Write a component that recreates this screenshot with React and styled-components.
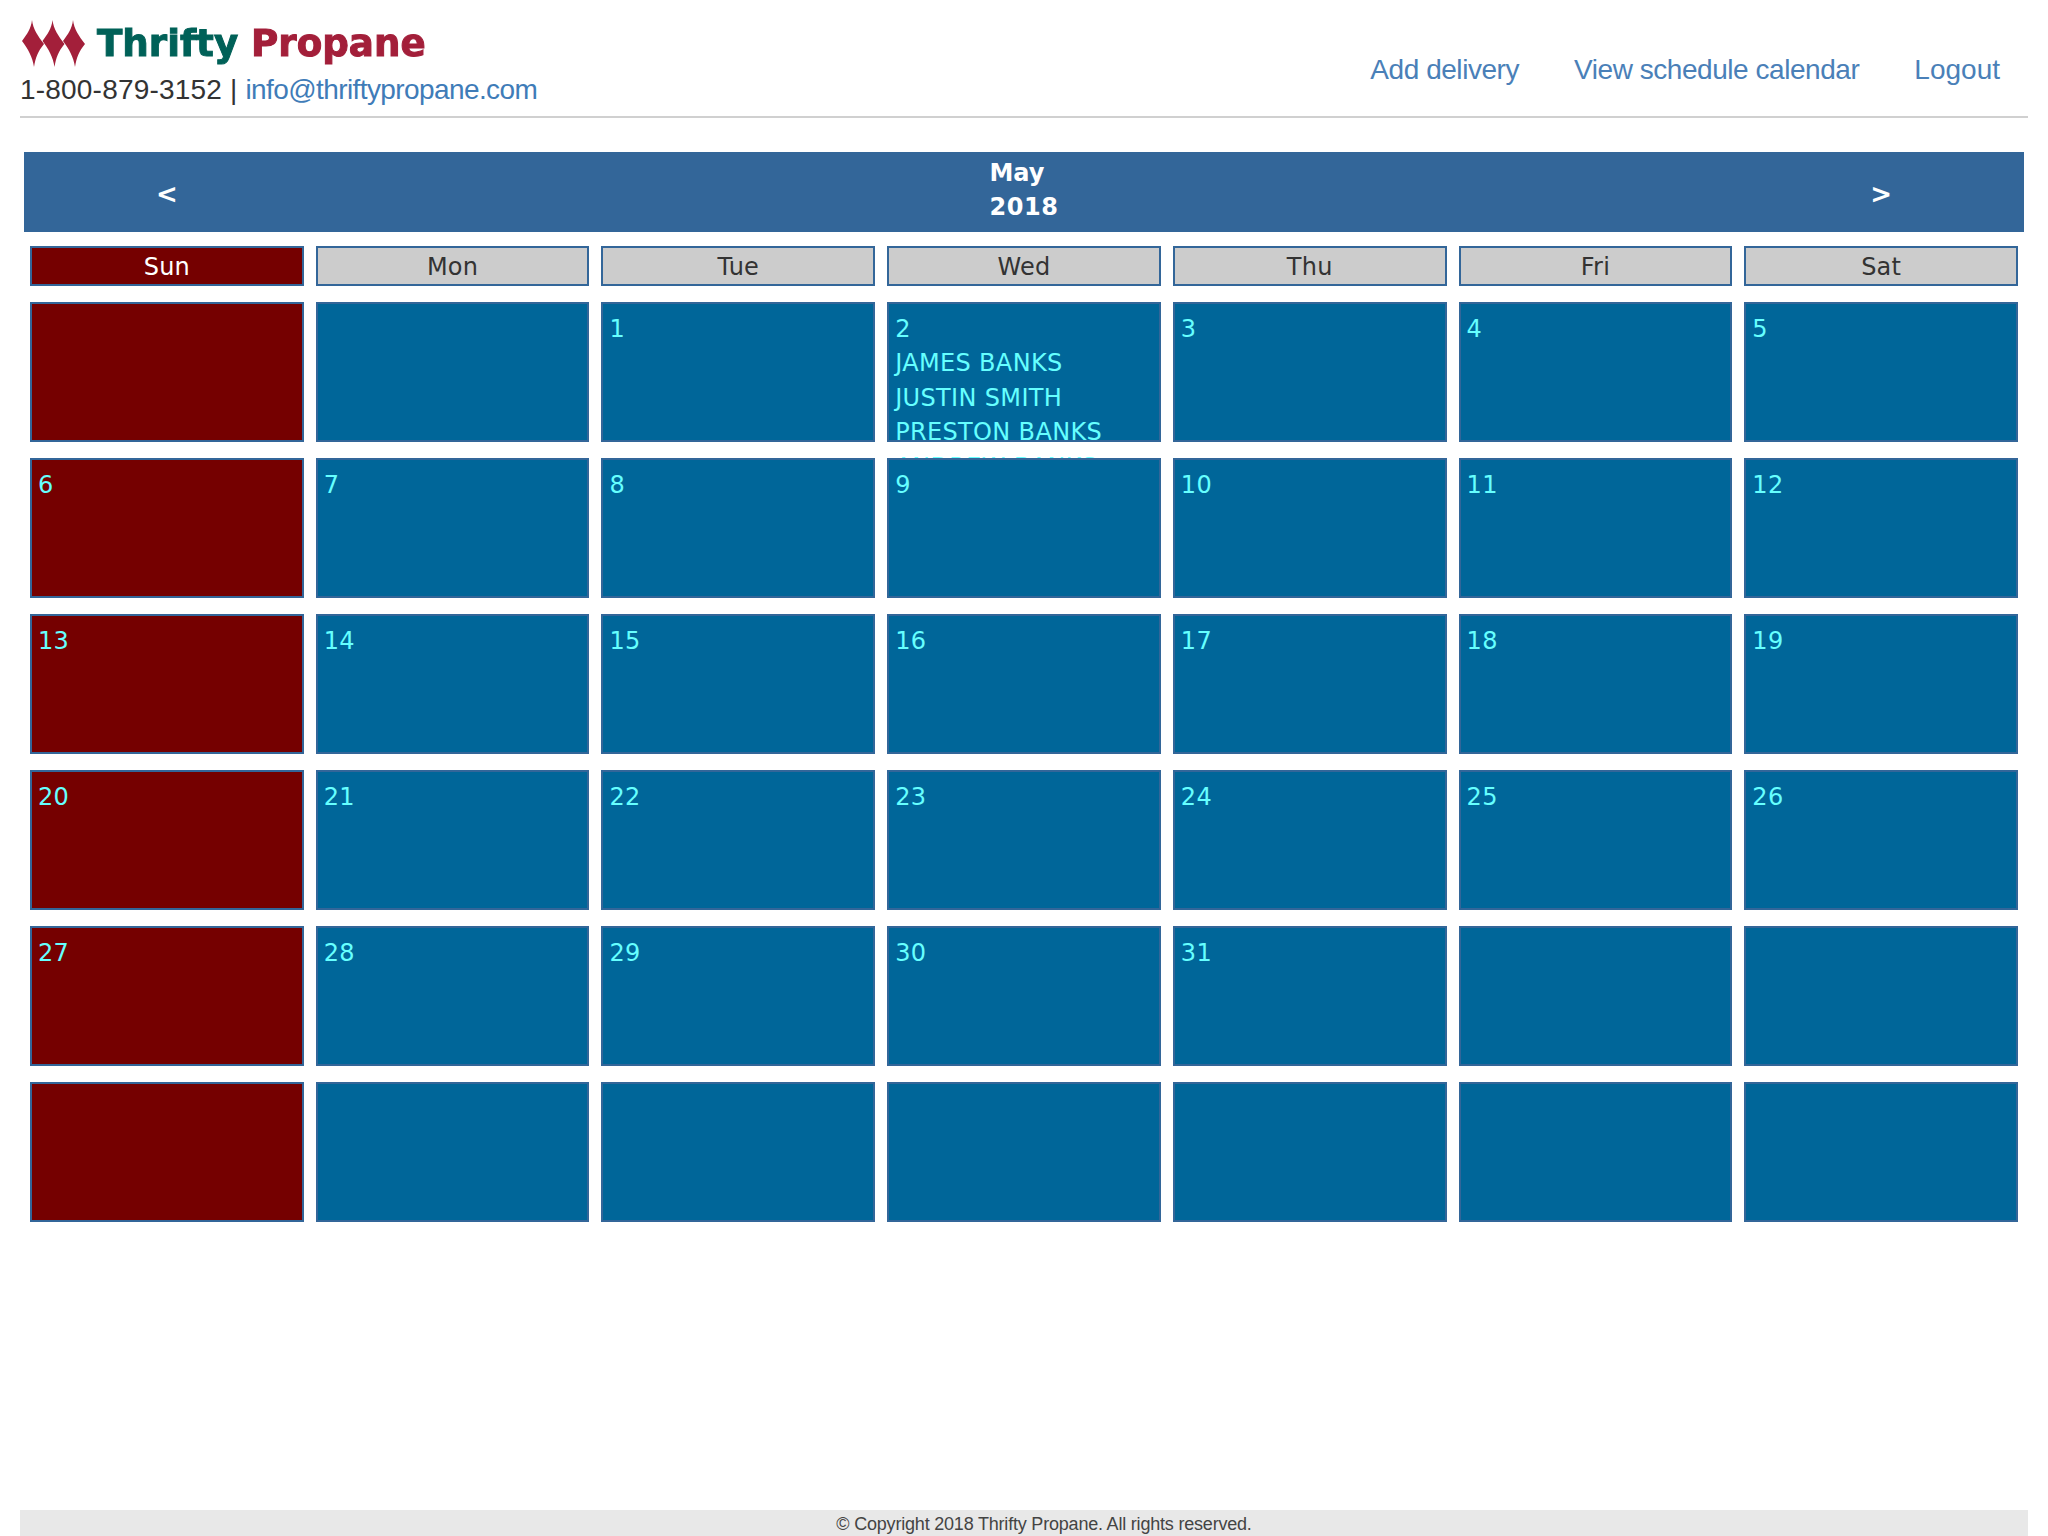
import styled, { createGlobalStyle } from "styled-components"

const GlobalStyle = createGlobalStyle`
  html, body { margin: 0; padding: 0; background: #fff; }
`

const weekDays = ["Sun", "Mon", "Tue", "Wed", "Thu", "Fri", "Sat"]
const names = ["JAMES BANKS", "JUSTIN SMITH", "PRESTON BANKS", "ANDREW BANKS"]

// 6 rows of 7, May 2018 starts on a Tuesday
const days = Array.from({ length: 42 }, (_, i) => {
  const n = i - 1
  return n >= 1 && n <= 31 ? n : null
})

function Flame({ x }) {
  return <path transform={`translate(${x} 0)`} d="M10 0 C11 9 16 16 22 24 C16 31 13.5 38 12 47 C10.5 37 6 29 0 21 C5 14 9 9 10 0 Z" />
}

export default function App() {
  return (
    <Page>
      <GlobalStyle />
      <Header>
        <Brand>
          <LogoRow>
            <LogoMark viewBox="0 0 63 47" aria-hidden="true">
              <Flame x={0} />
              <Flame x={20.5} />
              <Flame x={41} />
            </LogoMark>
            <LogoText>
              <Green>Thrifty</Green> <Red>Propane</Red>
            </LogoText>
          </LogoRow>
          <Contact>
            1-800-879-3152 | <ContactLink>info@thriftypropane.com</ContactLink>
          </Contact>
        </Brand>
        <Nav>
          <NavLink>Add delivery</NavLink>
          <NavLink>View schedule calendar</NavLink>
          <NavLink>Logout</NavLink>
        </Nav>
      </Header>

      <MonthBar>
        <Arrow>&lt;</Arrow>
        <MonthTitle>
          May
          <br />
          <Year>2018</Year>
        </MonthTitle>
        <Arrow>&gt;</Arrow>
      </MonthBar>

      <WeekRow>
        {weekDays.map((d, i) => (
          <WeekDay key={d} $sunday={i === 0}>{d}</WeekDay>
        ))}
      </WeekRow>

      <DayGrid>
        {days.map((n, i) => (
          <DayCell key={i} $sunday={i % 7 === 0}>
            {n}
            {n === 2 && names.map(name => <Name key={name}>{name}</Name>)}
          </DayCell>
        ))}
      </DayGrid>

      <Footer>© Copyright 2018 Thrifty Propane. All rights reserved.</Footer>
    </Page>
  )
}

const Page = styled.div`
  display: flex;
  flex-direction: column;
  min-height: 1536px;
  box-sizing: border-box;
  padding: 0 20px;
`

const Header = styled.header`
  display: flex;
  justify-content: space-between;
  align-items: flex-end;
  height: 116px;
  border-bottom: 2px solid #d0d0d0;
`

const Brand = styled.div`
  display: flex;
  flex-direction: column;
`

const LogoRow = styled.div`
  display: flex;
  align-items: center;
  gap: 12px;
  height: 47px;
  margin-bottom: 1px;
  padding-left: 2px;
`

const LogoMark = styled.svg`
  width: 63px;
  height: 47px;
  fill: #a31f3a;
  filter: blur(0.5px);
`

const LogoText = styled.div`
  font-family: "DejaVu Sans", sans-serif;
  font-weight: 700;
  font-size: 37.2px;
  white-space: pre;
  line-height: 47px;
  -webkit-text-stroke: 1px currentColor;
  filter: blur(0.6px);
`

const Green = styled.span`
  color: #006158;
`

const Red = styled.span`
  color: #a31f3a;
`

const Contact = styled.div`
  font-family: "Liberation Sans", Arial, sans-serif;
  font-size: 28px;
  letter-spacing: 0.2px;
  line-height: 44px;
  color: #333;
  margin-bottom: 4px;
`

const ContactLink = styled.a`
  color: #3f7cb8;
  letter-spacing: -0.6px;
`

const Nav = styled.nav`
  display: flex;
  gap: 55px;
  padding-right: 28px;
  margin-bottom: 26px;
`

const NavLink = styled.a`
  font-family: "Liberation Sans", Arial, sans-serif;
  font-size: 28px;
  letter-spacing: -0.45px;
  line-height: 40px;
  color: #4a80b8;

  &:last-child {
    letter-spacing: 0;
  }
`

const MonthBar = styled.div`
  display: grid;
  grid-template-columns: 285.7px 1fr 285.7px;
  align-items: center;
  height: 80px;
  margin: 34px 4px 0;
  background: #336699;
  color: #fff;
  font-family: "DejaVu Sans", Verdana, sans-serif;
  font-weight: 700;
  font-size: 24px;
`

const Arrow = styled.div`
  text-align: center;
  font-size: 26px;
  padding-top: 3px;
`

const MonthTitle = styled.div`
  justify-self: center;
  line-height: 34px;
  padding-bottom: 5px;
`

const Year = styled.span`
  letter-spacing: 0.6px;
`

const WeekRow = styled.div`
  display: grid;
  grid-template-columns: repeat(7, 1fr);
  column-gap: 12px;
  margin: 14px 10px 0;
`

const WeekDay = styled.div`
  box-sizing: border-box;
  height: 40px;
  border: 2px solid #336699;
  background: ${p => (p.$sunday ? "#750000" : "#cccccc")};
  color: ${p => (p.$sunday ? "#fff" : "#333")};
  font-family: "DejaVu Sans", Verdana, sans-serif;
  font-size: 24px;
  letter-spacing: 0.2px;
  line-height: 38px;
  text-align: center;
`

const DayGrid = styled.div`
  display: grid;
  grid-template-columns: repeat(7, 1fr);
  grid-auto-rows: 140px;
  gap: 16px 12px;
  margin: 16px 10px 0;
`

const DayCell = styled.div`
  position: relative;
  box-sizing: border-box;
  border: 2px solid #336699;
  background: ${p => (p.$sunday ? "#750000" : "#006699")};
  color: #66ffff;
  font-family: "DejaVu Sans", Verdana, sans-serif;
  font-size: 24px;
  letter-spacing: 0.35px;
  line-height: 34px;
  padding: 8px 6px 0;
`

const Name = styled.div`
  white-space: nowrap;
  line-height: 34.6px;
`

const Footer = styled.footer`
  margin-top: auto;
  height: 26px;
  padding-left: 40px;
  background: #e8e8e8;
  color: #444;
  font-family: "Liberation Sans", Arial, sans-serif;
  font-size: 18px;
  letter-spacing: -0.2px;
  line-height: 28px;
  text-align: center;
`
